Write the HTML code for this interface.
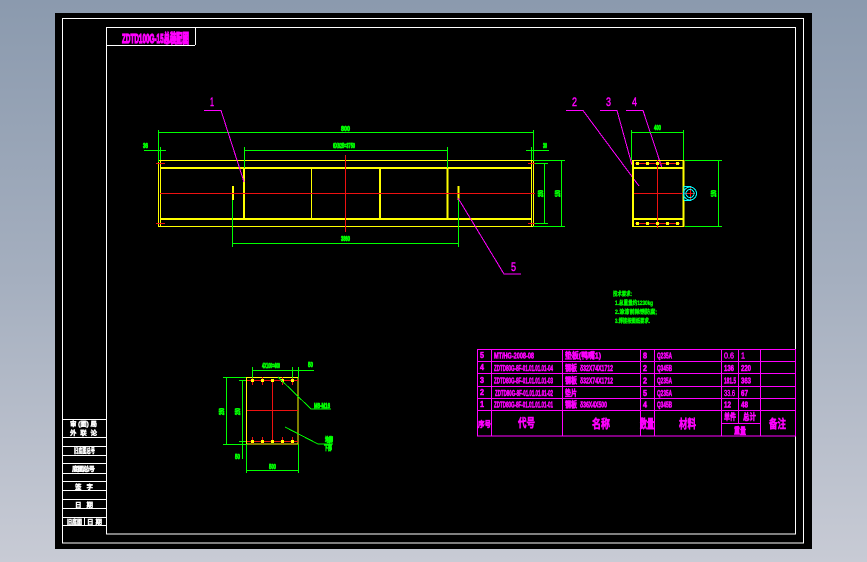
<!DOCTYPE html>
<html><head><meta charset="utf-8"><style>
html,body{margin:0;padding:0;width:867px;height:562px;overflow:hidden}
body{background:linear-gradient(180deg,#8b9aae 0%,#a5afbf 50%,#c8cbd5 100%)}
svg{position:absolute;left:0;top:0;shape-rendering:crispEdges}
text{font-family:"Liberation Sans","Noto Sans CJK SC",sans-serif;font-weight:bold;shape-rendering:auto}
.m{fill:#f0f;stroke:#f0f;stroke-width:.6}
.g{fill:#0f0;stroke:#0f0;stroke-width:.8}
.w{fill:#fff;stroke:#fff;stroke-width:.4}
.n{fill:#f0f;font-weight:normal;stroke:#f0f;stroke-width:.5}
</style></head><body>
<svg width="867" height="562" viewBox="0 0 867 562">
<rect x="55" y="13" width="757" height="536" fill="#000"/>
<!-- frames -->
<g fill="none" stroke="#fff" stroke-width="1">
<rect x="62.5" y="18.5" width="741" height="524.5"/>
<rect x="106.5" y="27.5" width="689" height="506.5"/>
<path d="M106 45.5H195M195.500 27V45"/>
<path d="M62 419.500H106M62 437.500H106M62 446.500H106M62 455.500H106M62 463.500H106M62 473.500H106M62 481.500H106M62 490.500H106M62 499.500H106M62 508.500H106M62 517.500H106M62 525.500H106M84.500 517V525"/>
</g>
<text class="m" x="122" y="43" font-size="13" textLength="67" lengthAdjust="spacingAndGlyphs" style="stroke-width:1.300">ZDTD100G-15总装配图</text>
<!-- title block text -->
<g font-size="6.500">
<text x="70" y="426" class="w" textLength="27">审 (图) 局</text>
<text x="70" y="435" class="w" textLength="27">外 联 论</text>
<text x="74" y="453" class="w" font-size="7" textLength="21" lengthAdjust="spacingAndGlyphs">旧底图总号</text>
<text x="72" y="471" class="w" textLength="23">底 图 总 号</text>
<text x="75" y="489" class="w" textLength="18">签 字</text>
<text x="75" y="507" class="w" textLength="18">日 期</text>
<text x="67" y="524" class="w" textLength="15" lengthAdjust="spacingAndGlyphs">旧底图</text>
<text x="87" y="524" class="w" textLength="15">日 期</text>
</g>
<!-- main view: yellow -->
<g stroke="#ff0" fill="none">
<path d="M158 160.500H533M158 226.500H533M158.500 160V227M160.500 160V227M531.500 160V227M533.500 160V227M311.500 168V219" stroke-width="1"/>
<path d="M160 168H531M160 219H531M244 168V219M380 168V219M447.500 168V219" stroke-width="2"/>
<path d="M233 186V200M458.500 186V200" stroke-width="2"/>
</g>
<!-- red -->
<g stroke="#e11" stroke-width="1" fill="none">
<path d="M160 193.500H535M345.500 155V232M156 163.500H165M156 223.500H165M528 163.500H535M528 223.500H535"/>
</g>
<!-- green dims main -->
<g stroke="#0f0" stroke-width="1" fill="none">
<path d="M158 132.500H533M158.500 130V162M533.500 130V160M144 150.500H166M160.500 147V160M244.500 147V168M447.500 147V168M244 150.500H447M531.500 147V160M526 150.500H549M233 243.500H458M232.500 200V247M458.500 200V247M535 163.500H548M544.500 163V223M535 223.500H548M533 160.500H565M533 226.500H565M561.500 160V226"/>
</g>
<g font-size="7">
<text class="g" x="341" y="131" textLength="9" lengthAdjust="spacingAndGlyphs">800</text>
<text class="g" x="333" y="148" textLength="22" lengthAdjust="spacingAndGlyphs">6X625=3750</text>
<text class="g" x="341" y="241" textLength="9" lengthAdjust="spacingAndGlyphs">3860</text>
<text class="g" x="143" y="148" textLength="5" lengthAdjust="spacingAndGlyphs">36</text>
<text class="g" x="543" y="148" textLength="4" lengthAdjust="spacingAndGlyphs">30</text>
<text class="g" x="543" y="197" textLength="7" lengthAdjust="spacingAndGlyphs" transform="rotate(-90 543 197)">250</text>
<text class="g" x="560" y="197" textLength="7" lengthAdjust="spacingAndGlyphs" transform="rotate(-90 560 197)">150</text>
</g>
<!-- leaders -->
<g stroke="#f0f" stroke-width="1" fill="none">
<path d="M204 110.500H221L244 182M458 198L504 274H521M566 110.500H583L639 186M600 110.500H617L632 165M626 110.500H643L662 168"/>
</g>
<g font-size="12">
<text class="n" x="210" y="106" textLength="4" lengthAdjust="spacingAndGlyphs">1</text>
<text class="n" x="511" y="271" textLength="5" lengthAdjust="spacingAndGlyphs">5</text>
<text class="n" x="572" y="106" textLength="5" lengthAdjust="spacingAndGlyphs">2</text>
<text class="n" x="606" y="106" textLength="5" lengthAdjust="spacingAndGlyphs">3</text>
<text class="n" x="632" y="106" textLength="5" lengthAdjust="spacingAndGlyphs">4</text>
</g>
<!-- side view -->
<g stroke="#ff0" fill="none">
<path d="M632 160.500H684M632 226.500H684" stroke-width="1"/>
<path d="M632 168H684M632 219H684M633 160V227M683.500 160V227" stroke-width="2"/>
</g>
<g stroke="#e11" stroke-width="1" fill="none">
<path d="M635 163.500H680M635 223.500H680M634 193.500H695M657.500 160V228M690.500 186V200"/>
</g>
<g fill="#ff0">
<rect x="636" y="162" width="3" height="3"/><rect x="646" y="162" width="3" height="3"/><rect x="656" y="162" width="3" height="3"/><rect x="666" y="162" width="3" height="3"/><rect x="676" y="162" width="3" height="3"/>
<rect x="636" y="222" width="3" height="3"/><rect x="646" y="222" width="3" height="3"/><rect x="656" y="222" width="3" height="3"/><rect x="666" y="222" width="3" height="3"/><rect x="676" y="222" width="3" height="3"/>
</g>
<g stroke="#0ff" stroke-width="1" fill="none">
<path d="M684 186.500H691M684 200.500H691M684 186V200"/>
<circle cx="690" cy="193.500" r="6.500"/><circle cx="690" cy="193.500" r="4"/>
</g>
<g stroke="#0f0" stroke-width="1" fill="none">
<path d="M631 132.500H683M631.500 130V160M683.500 130V160M685 160.500H722M685 226.500H722M718.500 160V226"/>
</g>
<text class="g" x="654" y="130" font-size="7" textLength="7" lengthAdjust="spacingAndGlyphs">400</text>
<text class="g" x="716" y="197" font-size="7" textLength="7" lengthAdjust="spacingAndGlyphs" transform="rotate(-90 716 197)">150</text>
<!-- bottom view -->
<rect x="246.500" y="377.500" width="51.500" height="66.500" fill="none" stroke="#ff0"/>
<g stroke="#e11" stroke-width="1" fill="none">
<path d="M247 380.500H298M247 441.500H298M247 410.500H298M272.500 380V441M252.500 377V385M262.500 377V385M282.500 377V385M292.500 377V385M252.500 437V444M262.500 437V444M282.500 437V444M292.500 437V444"/>
</g>
<g fill="#ff0">
<rect x="251" y="379" width="3" height="3"/><rect x="261" y="379" width="3" height="3"/><rect x="271" y="379" width="3" height="3"/><rect x="281" y="379" width="3" height="3"/><rect x="291" y="379" width="3" height="3"/>
<rect x="251" y="440" width="3" height="3"/><rect x="261" y="440" width="3" height="3"/><rect x="271" y="440" width="3" height="3"/><rect x="281" y="440" width="3" height="3"/><rect x="291" y="440" width="3" height="3"/>
</g>
<g stroke="#0f0" stroke-width="1" fill="none">
<path d="M252 370.500H314M252.500 367V378M292.500 367V378M298.500 367V378M223 377.500H246M223 444.500H246M226.500 377V444M239 380.500H246M239 441.500H246M242.500 380V459M246.500 444V473M298.500 444V473M246 470.500H298M278 377L311 409H331M285 427L318 444H333"/>
</g>
<g font-size="7">
<text class="g" x="262" y="368" textLength="18" lengthAdjust="spacingAndGlyphs">4X100=400</text>
<text class="g" x="308" y="367" textLength="5" lengthAdjust="spacingAndGlyphs">50</text>
<text class="g" x="224" y="415" textLength="7" lengthAdjust="spacingAndGlyphs" transform="rotate(-90 224 415)">250</text>
<text class="g" x="240" y="415" textLength="7" lengthAdjust="spacingAndGlyphs" transform="rotate(-90 240 415)">250</text>
<text class="g" x="235" y="459" textLength="5" lengthAdjust="spacingAndGlyphs">50</text>
<text class="g" x="269" y="469" textLength="7" lengthAdjust="spacingAndGlyphs">500</text>
<text class="g" x="314" y="408" textLength="16" lengthAdjust="spacingAndGlyphs">M8-M16</text>
<text class="g" x="325" y="442" textLength="8" lengthAdjust="spacingAndGlyphs">地脚</text>
<text class="g" x="324" y="450" textLength="8" lengthAdjust="spacingAndGlyphs">下部</text>
</g>
<!-- notes -->
<g font-size="6">
<text class="g" x="613" y="296" textLength="19" lengthAdjust="spacingAndGlyphs" style="stroke-width:.35">技术要求:</text>
<text class="g" x="615" y="305" textLength="38" lengthAdjust="spacingAndGlyphs" style="stroke-width:.35">1.总重量约1230kg</text>
<text class="g" x="615" y="314" textLength="42" lengthAdjust="spacingAndGlyphs" style="stroke-width:.35">2.涂漆前除锈防腐;</text>
<text class="g" x="615" y="323" textLength="35" lengthAdjust="spacingAndGlyphs" style="stroke-width:.35">3.焊接按图纸要求.</text>
</g>
<!-- table -->
<rect x="478" y="349" width="317" height="87" fill="#000"/>
<g stroke="#f0f" stroke-width="1" fill="none">
<rect x="477.500" y="349.500" width="318" height="86.500"/>
<path d="M477 361.500H795M477 373.500H795M477 386.500H795M477 398.500H795M477 410.500H795M491.500 349V436M562.500 349V436M640.500 349V436M654.500 349V436M721.500 349V436M738.500 349V423M760.500 349V436M721 423.500H760"/>
</g>
<g font-size="8.500">
<text class="m" x="480" y="358" textLength="4" lengthAdjust="spacingAndGlyphs">5</text>
<text class="m" x="480" y="370" textLength="4" lengthAdjust="spacingAndGlyphs">4</text>
<text class="m" x="480" y="383" textLength="4" lengthAdjust="spacingAndGlyphs">3</text>
<text class="m" x="480" y="395" textLength="4" lengthAdjust="spacingAndGlyphs">2</text>
<text class="m" x="480" y="407" textLength="4" lengthAdjust="spacingAndGlyphs">1</text>
<text class="m" x="494" y="358.500" textLength="40" lengthAdjust="spacingAndGlyphs">MT/HG-2008-08</text>
<text class="m" x="494" y="371" textLength="59" lengthAdjust="spacingAndGlyphs">ZDTD80G-8F-01.01.01.01-04</text>
<text class="m" x="494" y="383.500" textLength="59" lengthAdjust="spacingAndGlyphs">ZDTD80G-8F-01.01.01.01-03</text>
<text class="m" x="495" y="396" textLength="58" lengthAdjust="spacingAndGlyphs">ZDTD80G-8F-01.01.01.01-02</text>
<text class="m" x="494" y="407.500" textLength="59" lengthAdjust="spacingAndGlyphs">ZDTD80G-8F-01.01.01.01-01</text>
<text class="m" x="565" y="358.500" textLength="36" lengthAdjust="spacingAndGlyphs">垫板(鸭嘴1)</text>
<text class="m" x="565" y="371" textLength="12" lengthAdjust="spacingAndGlyphs">钢板</text>
<text class="m" x="580" y="371" textLength="33" lengthAdjust="spacingAndGlyphs">δ32X74X1712</text>
<text class="m" x="565" y="383.500" textLength="12" lengthAdjust="spacingAndGlyphs">钢板</text>
<text class="m" x="580" y="383.500" textLength="33" lengthAdjust="spacingAndGlyphs">δ32X74X1712</text>
<text class="m" x="565" y="396" textLength="12" lengthAdjust="spacingAndGlyphs">垫片</text>
<text class="m" x="565" y="407.500" textLength="12" lengthAdjust="spacingAndGlyphs">钢板</text>
<text class="m" x="580" y="407.500" textLength="27" lengthAdjust="spacingAndGlyphs">δ36X4X500</text>
<text class="m" x="643" y="358.500" textLength="4" lengthAdjust="spacingAndGlyphs">8</text>
<text class="m" x="643" y="371" textLength="4" lengthAdjust="spacingAndGlyphs">2</text>
<text class="m" x="643" y="383.500" textLength="4" lengthAdjust="spacingAndGlyphs">2</text>
<text class="m" x="643" y="396" textLength="4" lengthAdjust="spacingAndGlyphs">5</text>
<text class="m" x="643" y="407.500" textLength="4" lengthAdjust="spacingAndGlyphs">4</text>
<text class="m" x="657" y="358.500" textLength="15" lengthAdjust="spacingAndGlyphs">Q235A</text>
<text class="m" x="657" y="371" textLength="15" lengthAdjust="spacingAndGlyphs">Q345B</text>
<text class="m" x="657" y="383.500" textLength="15" lengthAdjust="spacingAndGlyphs">Q235A</text>
<text class="m" x="657" y="396" textLength="15" lengthAdjust="spacingAndGlyphs">Q235A</text>
<text class="m" x="657" y="407.500" textLength="15" lengthAdjust="spacingAndGlyphs">Q345B</text>
<text class="n" x="724" y="358.500" textLength="10" lengthAdjust="spacingAndGlyphs">0.6</text>
<text class="n" x="741" y="358.500" textLength="4" lengthAdjust="spacingAndGlyphs">1</text>
<text class="m" x="724" y="371" textLength="10" lengthAdjust="spacingAndGlyphs">136</text>
<text class="m" x="741" y="371" textLength="10" lengthAdjust="spacingAndGlyphs">220</text>
<text class="m" x="724" y="383.500" textLength="12" lengthAdjust="spacingAndGlyphs">181.5</text>
<text class="m" x="741" y="383.500" textLength="10" lengthAdjust="spacingAndGlyphs">363</text>
<text class="n" x="724" y="396" textLength="11" lengthAdjust="spacingAndGlyphs">33.6</text>
<text class="m" x="741" y="396" textLength="7" lengthAdjust="spacingAndGlyphs">67</text>
<text class="m" x="724" y="407.500" textLength="7" lengthAdjust="spacingAndGlyphs">12</text>
<text class="m" x="741" y="407.500" textLength="7" lengthAdjust="spacingAndGlyphs">48</text>
</g>
<g font-size="12">
<text class="m" x="478" y="427" font-size="8" textLength="13" lengthAdjust="spacingAndGlyphs">序号</text>
<text class="m" x="518" y="427" textLength="17" lengthAdjust="spacingAndGlyphs">代号</text>
<text class="m" x="592" y="428" textLength="18" lengthAdjust="spacingAndGlyphs">名称</text>
<text class="m" x="640" y="428" textLength="14" lengthAdjust="spacingAndGlyphs" style="stroke-width:.8">数量</text>
<text class="m" x="679" y="428" textLength="17" lengthAdjust="spacingAndGlyphs">材料</text>
<text class="m" x="724" y="420" font-size="9" textLength="12" lengthAdjust="spacingAndGlyphs">单件</text>
<text class="m" x="743" y="420" font-size="9" textLength="13" lengthAdjust="spacingAndGlyphs">总计</text>
<text class="m" x="734" y="434" font-size="9" textLength="12" lengthAdjust="spacingAndGlyphs">重量</text>
<text class="m" x="769" y="428" textLength="17" lengthAdjust="spacingAndGlyphs">备注</text>
</g>
</svg>
</body></html>
